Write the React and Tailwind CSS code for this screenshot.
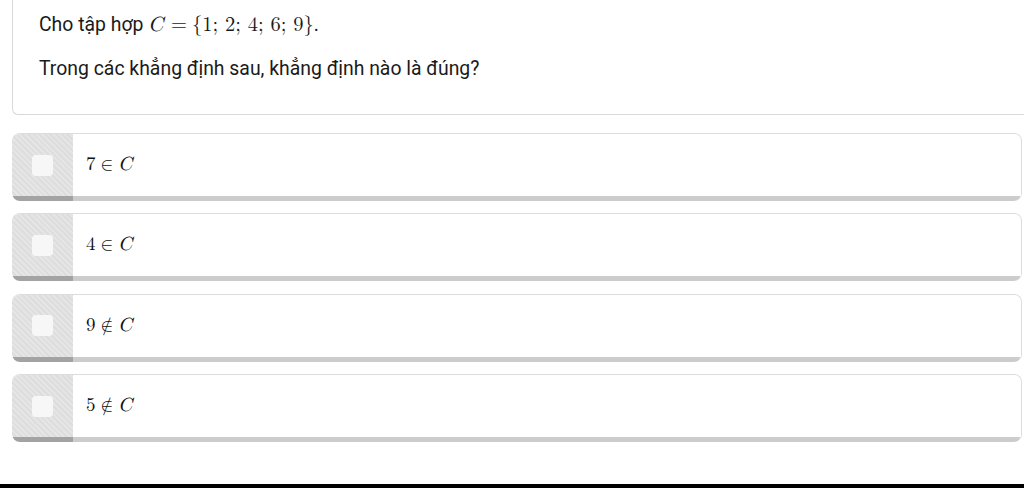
const options = [
  { n: '7', rel: '∈' },
  { n: '4', rel: '∈' },
  { n: '9', rel: '∉' },
  { n: '5', rel: '∉' },
];

const Math = ({ children, size = 'text-[19px]' }) => (
  <span className={`font-['Latin_Modern_Math','Liberation_Serif',serif] ${size}`}>{children}</span>
);

const Option = ({ n, rel }) => (
  <div className="flex h-[68px] rounded-lg overflow-hidden border-t border-r border-[#dcdcdc]">
    <div className="w-[61px] shrink-0 flex items-center justify-center border-b-[5px] border-[#a3a3a3] bg-[repeating-linear-gradient(45deg,#e5e5e5_0px,#e5e5e5_2px,#dddddd_2px,#dddddd_4px)]">
      <div className="w-[21px] h-[21px] rounded-[4px] bg-[#f7f7f7] mr-[1px]"></div>
    </div>
    <div className="flex-1 flex items-center pl-[13px] border-b-[5px] border-[#cccccc] bg-white text-[#111]">
      <Math>
        {n}
        <span className="mx-[5px]">{rel}</span>
        <i>C</i>
      </Math>
    </div>
  </div>
);

export default function App() {
  return (
    <div className="w-[1024px] h-[488px] bg-white flex flex-col overflow-hidden font-['Roboto','Liberation_Sans',sans-serif] text-[#1a1a1a]">
      <div className="ml-3 h-[115px] border border-t-0 border-r-0 border-[#d9d9d9] rounded-bl-md pl-[26px] pt-[11px]">
        <p className="text-[19.4px] leading-[28px]">
          Cho tập hợp{' '}
          <Math size="text-[20.5px]">
            <i className="mr-[8px]">C</i>
            <span className="mr-[5px]">=</span>
            {'{'}1; 2; 4; 6; 9{'}'}
          </Math>
          .
        </p>
        <p className="text-[19.4px] leading-[28px] mt-[16px]">Trong các khẳng định sau, khẳng định nào là đúng?</p>
      </div>
      <div className="ml-3 mr-[2px] mt-[18px] flex flex-col gap-[12.4px]">
        {options.map((o) => (
          <Option key={o.n} {...o} />
        ))}
      </div>
      <div className="mt-auto h-1 bg-black"></div>
    </div>
  );
}
